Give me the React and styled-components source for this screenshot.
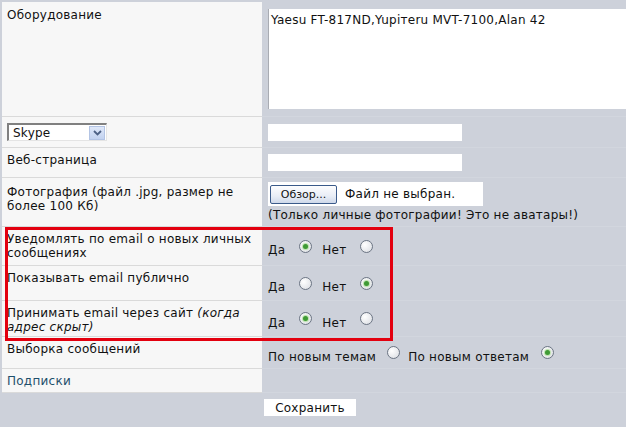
import React from 'react';
import styled, { createGlobalStyle } from 'styled-components';

const GlobalStyle = createGlobalStyle`
  html, body {
    margin: 0;
    padding: 0;
    background: #cdd1da;
    overflow: hidden;
  }
  body {
    font-family: "DejaVu Sans", Verdana, sans-serif;
    font-size: 12px;
    letter-spacing: 0.25px;
    color: #111;
  }
`;

const Page = styled.div`
  position: relative;
  padding: 2px 0 0 2px;
  width: 626px;
  height: 427px;
  box-sizing: border-box;
`;

const Row = styled.div`
  display: grid;
  grid-template-columns: 260px 1fr;
  height: ${(p) => p.h}px;
`;

const LabelCell = styled.div`
  background: #f7f7f7;
  border-bottom: 1px solid #dadada;
  padding: ${(p) => p.pt || 5}px 5px 0 5px;
  line-height: 14px;
  box-sizing: border-box;
`;

const ValueCell = styled.div`
  display: flex;
  flex-direction: column;
  justify-content: center;
  align-items: flex-start;
  padding-left: 6px;
  border-bottom: 1px solid #d2d6de;
  box-sizing: border-box;
  min-width: 0;
`;

const TextArea = styled.div`
  width: 370px;
  height: 100px;
  background: #fff;
  border-left: 1px solid #a9acb3;
  box-sizing: border-box;
  padding: 4px 2px;
  line-height: 14px;
  white-space: nowrap;
`;

const TextInput = styled.div`
  width: 194px;
  height: 17px;
  background: #fff;
`;

const SelectBox = styled.div`
  display: flex;
  align-items: center;
  width: 100px;
  height: 18px;
  box-sizing: border-box;
  background: #fff;
  border-top: 2px solid #808080;
  border-left: 2px solid #808080;
  border-bottom: 1px solid #e4e4e4;
  border-right: 1px solid #e4e4e4;
  margin-top: 1px;
`;

const SelectText = styled.span`
  flex: 1;
  padding-left: 4px;
  line-height: 14px;
`;

const SelectArrow = styled.span`
  width: 16px;
  height: 14px;
  margin-right: 1px;
  background: linear-gradient(#dfe8f9, #c2d2f0);
  border: 1px solid #b3c4e4;
  box-sizing: border-box;
  display: flex;
  align-items: center;
  justify-content: center;
`;

const FileBox = styled.div`
  display: flex;
  align-items: center;
  width: 215px;
  height: 24px;
  background: #fff;
  padding-left: 2px;
  box-sizing: border-box;
`;

const BrowseButton = styled.span`
  width: 67px;
  height: 19px;
  box-sizing: border-box;
  border: 1px solid #3a5a8a;
  border-radius: 2px;
  background: linear-gradient(#fdfdfe, #e8edf6 60%, #cfd9ea);
  display: flex;
  align-items: center;
  justify-content: center;
  font-size: 11px;
  letter-spacing: 0;
  margin-right: 8px;
`;

const Note = styled.div`
  margin-top: 2px;
  line-height: 14px;
  white-space: nowrap;
`;

const Options = styled.div`
  display: flex;
  align-items: center;
  margin-top: ${(p) => p.mt || 0}px;
  white-space: nowrap;
`;

const Radio = styled.span`
  width: 13px;
  height: 13px;
  box-sizing: border-box;
  border-radius: 50%;
  border: 1px solid #6c7584;
  background: radial-gradient(circle at 35% 35%, #ffffff, #e4e6ea 70%, #d2d5db);
  display: inline-flex;
  align-items: center;
  justify-content: center;
  margin: 0 ${(p) => p.mr}px 8px ${(p) => p.ml}px;

  &::after {
    content: '';
    width: 5px;
    height: 5px;
    border-radius: 50%;
    background: ${(p) => (p.checked ? '#3f9a35' : 'transparent')};
    box-shadow: ${(p) => (p.checked ? '0 0 1px 1px #b8e0a8' : 'none')};
  }
`;

const Italic = styled.i`
  font-style: italic;
`;

const Link = styled.a`
  color: #1f4f6c;
  text-decoration: none;
`;

const Footer = styled.div`
  display: flex;
  justify-content: center;
  padding: 6px 8px 0 0;
`;

const SaveButton = styled.span`
  width: 92px;
  height: 17px;
  background: #fff;
  display: flex;
  align-items: center;
  justify-content: center;
  line-height: 14px;
`;

const Highlight = styled.div`
  position: absolute;
  left: 5px;
  top: 227px;
  width: 388px;
  height: 114px;
  box-sizing: border-box;
  border: 3px solid #e3000f;
  pointer-events: none;
`;

const YesNo = ({ yes }) => (
  <Options mt={8}>
    Да
    <Radio checked={yes} ml={14} mr={10} />
    Нет
    <Radio checked={!yes} ml={14} mr={0} />
  </Options>
);

export default function App() {
  return (
    <>
      <GlobalStyle />
      <Page>
        <Row h={115}>
          <LabelCell pt={6}>Оборудование</LabelCell>
          <ValueCell>
            <TextArea>Yaesu FT-817ND,Yupiтeru MVT-7100,Alan 42</TextArea>
          </ValueCell>
        </Row>
        <Row h={31}>
          <LabelCell pt={5}>
            <SelectBox>
              <SelectText>Skype</SelectText>
              <SelectArrow>
                <svg width="9" height="6" viewBox="0 0 9 6">
                  <path d="M1 1 L4.5 4.5 L8 1" fill="none" stroke="#4d6185" strokeWidth="1.8" />
                </svg>
              </SelectArrow>
            </SelectBox>
          </LabelCell>
          <ValueCell>
            <TextInput />
          </ValueCell>
        </Row>
        <Row h={30}>
          <LabelCell pt={5}>Веб-страница</LabelCell>
          <ValueCell>
            <TextInput />
          </ValueCell>
        </Row>
        <Row h={49}>
          <LabelCell pt={7}>
            Фотография (файл .jpg, размер не
            <br />
            более 100 Кб)
          </LabelCell>
          <ValueCell>
            <FileBox>
              <BrowseButton>Обзор...</BrowseButton>
              Файл не выбран.
            </FileBox>
            <Note>(Только личные фотографии! Это не аватары!)</Note>
          </ValueCell>
        </Row>
        <Row h={39}>
          <LabelCell pt={5}>
            Уведомлять по email о новых личных
            <br />
            сообщениях
          </LabelCell>
          <ValueCell>
            <YesNo yes />
          </ValueCell>
        </Row>
        <Row h={35}>
          <LabelCell pt={5}>Показывать email публично</LabelCell>
          <ValueCell>
            <YesNo yes={false} />
          </ValueCell>
        </Row>
        <Row h={36}>
          <LabelCell pt={5}>
            Принимать email через сайт <Italic>(когда</Italic>
            <br />
            <Italic>адрес скрыт)</Italic>
          </LabelCell>
          <ValueCell>
            <YesNo yes />
          </ValueCell>
        </Row>
        <Row h={32}>
          <LabelCell pt={5}>Выборка сообщений</LabelCell>
          <ValueCell>
            <Options mt={8}>
              По новым темам
              <Radio ml={11} mr={8} />
              По новым ответам
              <Radio checked ml={12} mr={0} />
            </Options>
          </ValueCell>
        </Row>
        <Row h={24}>
          <LabelCell pt={5}>
            <Link href="#">Подписки</Link>
          </LabelCell>
          <ValueCell />
        </Row>
        <Footer>
          <SaveButton>Сохранить</SaveButton>
        </Footer>
        <Highlight />
      </Page>
    </>
  );
}
